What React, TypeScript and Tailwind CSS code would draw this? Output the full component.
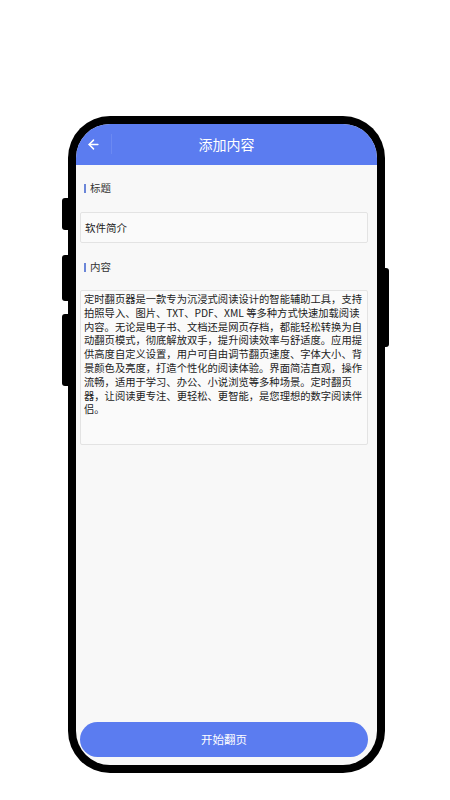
import { ArrowLeft } from 'lucide-react';

const content =
  '定时翻页器是一款专为沉浸式阅读设计的智能辅助工具，支持拍照导入、图片、TXT、PDF、XML 等多种方式快速加载阅读内容。无论是电子书、文档还是网页存档，都能轻松转换为自动翻页模式，彻底解放双手，提升阅读效率与舒适度。应用提供高度自定义设置，用户可自由调节翻页速度、字体大小、背景颜色及亮度，打造个性化的阅读体验。界面简洁直观，操作流畅，适用于学习、办公、小说浏览等多种场景。定时翻页器，让阅读更专注、更轻松、更智能，是您理想的数字阅读伴侣。';

function FieldLabel({ text }: { text: string }) {
  return (
    <div className="flex items-center h-4 pl-[4px]">
      <span className="w-[2px] h-[9px] bg-[#6b86d8] mr-[4px]"></span>
      <span className="text-[10.5px] text-[#333]">{text}</span>
    </div>
  );
}

export default function App() {
  return (
    <div
      className="w-[450px] h-[800px] bg-white pt-[116px] pl-[68px]"
      style={{ fontFamily: '"Noto Sans CJK SC", "Noto Sans", sans-serif' }}
    >
      {/* Phone */}
      <div className="relative w-[317px] h-[657px] rounded-[42px] bg-black p-[8px]">
        {/* side buttons */}
        <div className="absolute left-[-6px] top-[82px] w-[8px] h-[32px] rounded-l-[3px] bg-black"></div>
        <div className="absolute left-[-6px] top-[139px] w-[8px] h-[46px] rounded-l-[3px] bg-black"></div>
        <div className="absolute left-[-6px] top-[198px] w-[8px] h-[72px] rounded-l-[3px] bg-black"></div>
        <div className="absolute right-[-4px] top-[152px] w-[6px] h-[79px] rounded-r-[3px] bg-black"></div>

        {/* Screen */}
        <div className="flex flex-col h-full rounded-[34px] overflow-hidden bg-[#f8f8f8]">
          <header className="relative h-[41px] shrink-0 bg-[#5b7cf0] flex items-center justify-center">
            <ArrowLeft className="absolute left-[10px] w-[15px] h-[15px] text-white" strokeWidth={2.4} />
            <span className="absolute left-[35px] top-[10px] w-px h-[20px] bg-white/10"></span>
            <span className="text-[14px] text-white">添加内容</span>
          </header>

          <div className="flex flex-col flex-1 pl-[4px] pr-[9px]">
            <div className="mt-[15px]">
              <FieldLabel text="标题" />
            </div>
            <div className="mt-[16px] h-[31px] border border-[#e3e3e3] rounded-[2px] bg-[#fafafa] flex items-center px-[4px]">
              <span className="text-[10.5px] text-[#222]">软件简介</span>
            </div>

            <div className="mt-[16px]">
              <FieldLabel text="内容" />
            </div>
            <div className="mt-[15px] h-[155px] border border-[#e3e3e3] rounded-[2px] bg-[#fafafa] pt-[1px] px-[3px]">
              <p className="text-[10.3px] leading-[13.8px] text-[#222] break-all">{content}</p>
            </div>

            <div className="flex-1"></div>

            <button className="mb-[8px] h-[35px] w-full rounded-full bg-[#5b7cf0] text-white text-[11.5px]">
              开始翻页
            </button>
          </div>
        </div>
      </div>
    </div>
  );
}
